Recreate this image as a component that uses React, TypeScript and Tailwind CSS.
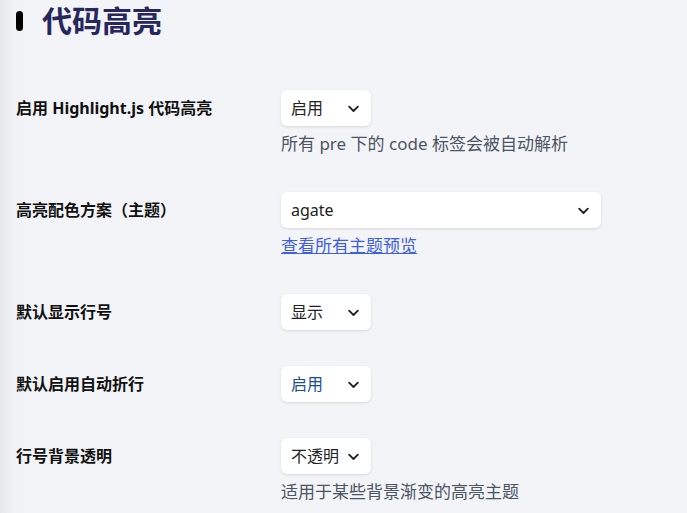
import React from "react";

const font = { fontFamily: '"Noto Sans", "Noto Sans CJK SC", sans-serif' };

const Chevron = () => (
    <svg width="15" height="15" viewBox="0 0 24 24" fill="none" stroke="#222" strokeWidth="3" strokeLinecap="round" strokeLinejoin="round">
        <path d="M5 9l7 7 7-7" />
    </svg>
);

interface SelectBoxProps {
    value: string;
    width: string;
    valueClass?: string;
}

const SelectBox = ({ value, width, valueClass = "text-[#222]" }: SelectBoxProps) => {
    return (
        <div className={`${width} h-9 bg-white rounded-md shadow-[0_1px_3px_rgba(0,0,0,0.12)] flex items-center justify-between pl-[10px] pr-[10px]`}>
            <span className={`text-[16px] ${valueClass}`}>{value}</span>
            <Chevron />
        </div>
    );
};

interface RowProps {
    label: string;
    children: React.ReactNode;
}

const Row = ({ label, children }: RowProps) => {
    return (
        <div className="flex items-start">
            <div className="w-[265px] h-9 flex items-center text-[16px] font-bold text-[#111]">{label}</div>
            <div className="flex flex-col items-start">{children}</div>
        </div>
    );
};

export default function App() {
    return (
        <div className="w-[687px] h-[513px] overflow-hidden bg-[linear-gradient(to_right,#e6e7eb_0px,#f1f2f5_12px,#f3f4f7_30px)]" style={font}>
            <div className="pl-4 pt-[7px] flex items-center gap-[19px] h-[34px]">
                <div className="w-[7px] h-5 rounded-full bg-black" />
                <h1 className="text-[30px] font-bold text-[#27275c] leading-none">代码高亮</h1>
            </div>

            <div className="pl-4 pt-[56px] flex flex-col gap-[36px]">
                <Row label="启用 Highlight.js 代码高亮">
                    <SelectBox value="启用" width="w-[90px]" />
                    <p className="mt-[6px] text-[17px] leading-[24px] text-[#4b5563]">所有 pre 下的 code 标签会被自动解析</p>
                </Row>

                <Row label="高亮配色方案（主题）">
                    <SelectBox value="agate" width="w-[320px]" />
                    <a className="mt-[6px] text-[17px] leading-[24px] text-[#3f5fe0] underline">查看所有主题预览</a>
                </Row>

                <Row label="默认显示行号">
                    <SelectBox value="显示" width="w-[90px]" />
                </Row>

                <Row label="默认启用自动折行">
                    <SelectBox value="启用" width="w-[90px]" valueClass="text-[#1d4f8f]" />
                </Row>

                <Row label="行号背景透明">
                    <SelectBox value="不透明" width="w-[90px]" />
                    <p className="mt-[6px] text-[17px] leading-[24px] text-[#4b5563]">适用于某些背景渐变的高亮主题</p>
                </Row>
            </div>
        </div>
    );
}
